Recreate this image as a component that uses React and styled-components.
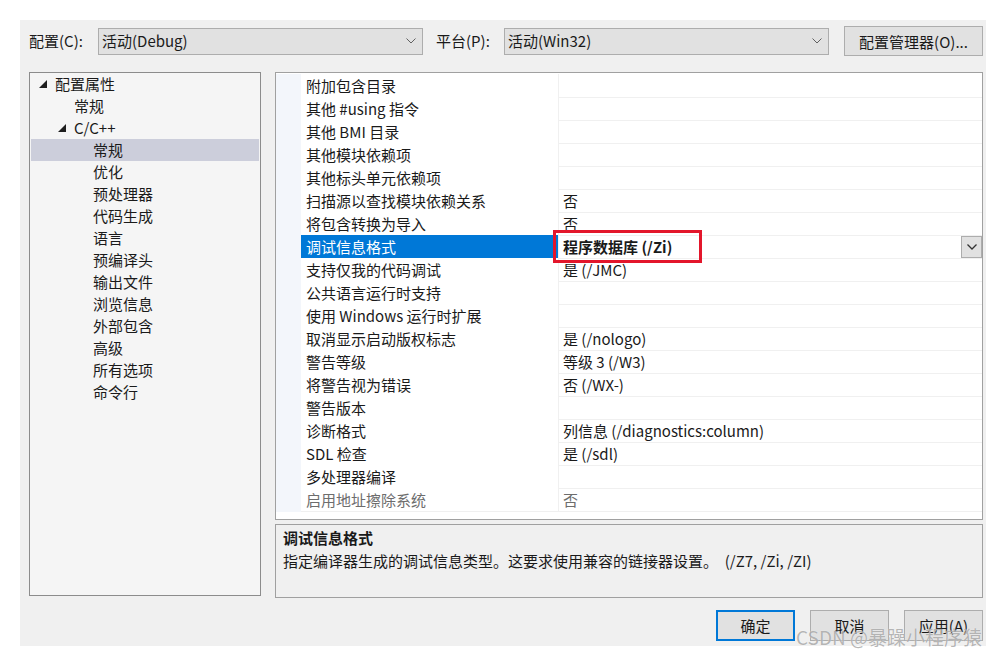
import React from 'react'
import styled, { createGlobalStyle } from 'styled-components'

const GlobalStyle = createGlobalStyle`
  html, body {
    margin: 0;
    padding: 0;
    background: #ffffff;
  }
  body {
    font-family: "Noto Sans CJK SC", "Noto Sans", sans-serif;
    font-size: 15px;
    color: #1a1a1a;
  }
  * { box-sizing: border-box; }
`

const Page = styled.div`
  padding: 20px 11px 10px 20px;
`

const Dialog = styled.div`
  width: 966px;
  height: 626px;
  background: #f0f0f0;
  padding: 6px 3px 5px 9px;
  display: flex;
  flex-direction: column;
  position: relative;
`

const TopBar = styled.div`
  height: 30px;
  display: flex;
  align-items: center;
`

const Label = styled.span`
  line-height: 22px;
  white-space: nowrap;
  width: ${p => p.$w}px;
`

const Combo = styled.div`
  width: 325px;
  height: 27px;
  background: #e1e1e1;
  border: 1px solid #adadad;
  display: flex;
  align-items: center;
  justify-content: space-between;
  padding: 0 6px 0 3px;
  line-height: 22px;
  margin-right: ${p => p.$mr || 0}px;
`

const ToolButton = styled.button`
  font: inherit;
  color: inherit;
  height: 30px;
  width: 139px;
  background: #e1e1e1;
  border: 1px solid #adadad;
  padding: 0;
  margin-left: auto;
`

const Main = styled.div`
  margin-top: 16px;
  height: 526px;
  display: flex;
  gap: 14px;
`

const Tree = styled.div`
  width: 232px;
  height: 524px;
  background: #f5f5f5;
  border: 1px solid #8c8c8c;
  padding: 0 1px;
`

const TreeRow = styled.div`
  height: 22px;
  line-height: 22px;
  display: flex;
  align-items: center;
  padding-left: ${p => 7 + p.$level * 19}px;
  background: ${p => (p.$selected ? '#cccedb' : 'transparent')};
`

const Toggle = styled.span`
  width: 17px;
  height: 22px;
  display: flex;
  align-items: center;
  padding-left: 1px;
`

const RightCol = styled.div`
  width: 708px;
  display: flex;
  flex-direction: column;
  gap: 4px;
`

const Grid = styled.div`
  height: 448px;
  background: #ffffff;
  border: 1px solid #a0a0a0;
  padding-top: 1px;
`

const GridRow = styled.div`
  height: 23px;
  display: grid;
  grid-template-columns: 25px 258px 1fr;
`

const Strip = styled.div`
  background: #f3f6fb;
`

const NameCell = styled.div`
  padding-left: 5px;
  line-height: 23px;
  border-bottom: 1px solid #f0f0f0;
  border-right: 1px solid #f0f0f0;
  white-space: nowrap;
  background: ${p => (p.$selected ? '#0078d7' : '#ffffff')};
  color: ${p => (p.$selected ? '#ffffff' : p.$disabled ? '#6d6d6d' : 'inherit')};
`

const ValueCell = styled.div`
  position: relative;
  padding-left: 4px;
  line-height: 23px;
  border-bottom: 1px solid #f0f0f0;
  white-space: nowrap;
  display: flex;
  align-items: center;
  font-weight: ${p => (p.$selected ? 700 : 400)};
  color: ${p => (p.$disabled ? '#6d6d6d' : 'inherit')};
`

const DropButton = styled.div`
  margin-left: auto;
  width: 21px;
  height: 22px;
  background: #e1e1e1;
  border: 1px solid #adadad;
  display: flex;
  align-items: center;
  justify-content: center;
`

const Highlight = styled.div`
  position: absolute;
  left: -6px;
  top: -5px;
  width: 149px;
  height: 33px;
  border: 3px solid #e3162b;
  pointer-events: none;
`

const Description = styled.div`
  height: 74px;
  border: 1px solid #a0a0a0;
  background: #f0f0f0;
  padding: 1px 7px;
  line-height: 23px;
`

const DescTitle = styled.div`
  font-weight: 700;
`

const DescText = styled.div`
  white-space: pre;
`

const Footer = styled.div`
  margin-top: 12px;
  height: 31px;
  display: flex;
  justify-content: flex-end;
  gap: 15px;
`

const DialogButton = styled.button`
  font: inherit;
  color: inherit;
  width: 79px;
  height: 31px;
  padding: 0;
  background: #e1e1e1;
  border: ${p => (p.$primary ? '2px solid #0078d7' : '1px solid #adadad')};
`

const Watermark = styled.div`
  position: absolute;
  right: 4px;
  bottom: -3px;
  font-family: "Noto Sans CJK SC", sans-serif;
  font-size: 19px;
  line-height: 24px;
  color: rgba(110, 110, 110, 0.5);
  text-shadow: 0 0 1px rgba(255, 255, 255, 0.9);
  pointer-events: none;
  white-space: nowrap;
`

const Chevron = ({ color = '#606060', w = 10, stroke = 1 }) => (
  <svg width={w} height={6} viewBox="0 0 10 6">
    <polyline points="0.5,0.5 5,5 9.5,0.5" fill="none" stroke={color} strokeWidth={stroke} />
  </svg>
)

const Expander = () => (
  <svg width="8" height="8" viewBox="0 0 8 8">
    <polygon points="8,0 8,8 0,8" fill="#1e1e1e" />
  </svg>
)

const treeItems = [
  { label: '配置属性', level: 0, open: true },
  { label: '常规', level: 1 },
  { label: 'C/C++', level: 1, open: true },
  { label: '常规', level: 2, selected: true },
  { label: '优化', level: 2 },
  { label: '预处理器', level: 2 },
  { label: '代码生成', level: 2 },
  { label: '语言', level: 2 },
  { label: '预编译头', level: 2 },
  { label: '输出文件', level: 2 },
  { label: '浏览信息', level: 2 },
  { label: '外部包含', level: 2 },
  { label: '高级', level: 2 },
  { label: '所有选项', level: 2 },
  { label: '命令行', level: 2 },
]

const properties = [
  ['附加包含目录', ''],
  ['其他 #using 指令', ''],
  ['其他 BMI 目录', ''],
  ['其他模块依赖项', ''],
  ['其他标头单元依赖项', ''],
  ['扫描源以查找模块依赖关系', '否'],
  ['将包含转换为导入', '否'],
  ['调试信息格式', '程序数据库 (/Zi)', 'selected'],
  ['支持仅我的代码调试', '是 (/JMC)'],
  ['公共语言运行时支持', ''],
  ['使用 Windows 运行时扩展', ''],
  ['取消显示启动版权标志', '是 (/nologo)'],
  ['警告等级', '等级 3 (/W3)'],
  ['将警告视为错误', '否 (/WX-)'],
  ['警告版本', ''],
  ['诊断格式', '列信息 (/diagnostics:column)'],
  ['SDL 检查', '是 (/sdl)'],
  ['多处理器编译', ''],
  ['启用地址擦除系统', '否', 'disabled'],
]

export default function App() {
  return (
    <Page>
      <GlobalStyle />
      <Dialog>
        <TopBar>
          <Label $w={69}>配置(C):</Label>
          <Combo $mr={13}>
            <span>活动(Debug)</span>
            <Chevron />
          </Combo>
          <Label $w={68}>平台(P):</Label>
          <Combo>
            <span>活动(Win32)</span>
            <Chevron />
          </Combo>
          <ToolButton>配置管理器(O)...</ToolButton>
        </TopBar>

        <Main>
          <Tree>
            {treeItems.map((item, i) => (
              <TreeRow key={i} $level={item.level} $selected={item.selected}>
                <Toggle>{item.open && <Expander />}</Toggle>
                <span>{item.label}</span>
              </TreeRow>
            ))}
          </Tree>

          <RightCol>
            <Grid>
              {properties.map(([name, value, state], i) => {
                const selected = state === 'selected'
                const disabled = state === 'disabled'
                return (
                  <GridRow key={i}>
                    <Strip />
                    <NameCell $selected={selected} $disabled={disabled}>{name}</NameCell>
                    <ValueCell $selected={selected} $disabled={disabled}>
                      <span>{value}</span>
                      {selected && (
                        <>
                          <Highlight />
                          <DropButton>
                            <Chevron color="#333333" w={10} stroke={1.3} />
                          </DropButton>
                        </>
                      )}
                    </ValueCell>
                  </GridRow>
                )
              })}
            </Grid>
            <Description>
              <DescTitle>调试信息格式</DescTitle>
              <DescText>指定编译器生成的调试信息类型。这要求使用兼容的链接器设置。  (/Z7, /Zi, /ZI)</DescText>
            </Description>
          </RightCol>
        </Main>

        <Footer>
          <DialogButton $primary>确定</DialogButton>
          <DialogButton>取消</DialogButton>
          <DialogButton>应用(A)</DialogButton>
        </Footer>
        <Watermark>CSDN @暴躁小程序猿</Watermark>
      </Dialog>
    </Page>
  )
}
